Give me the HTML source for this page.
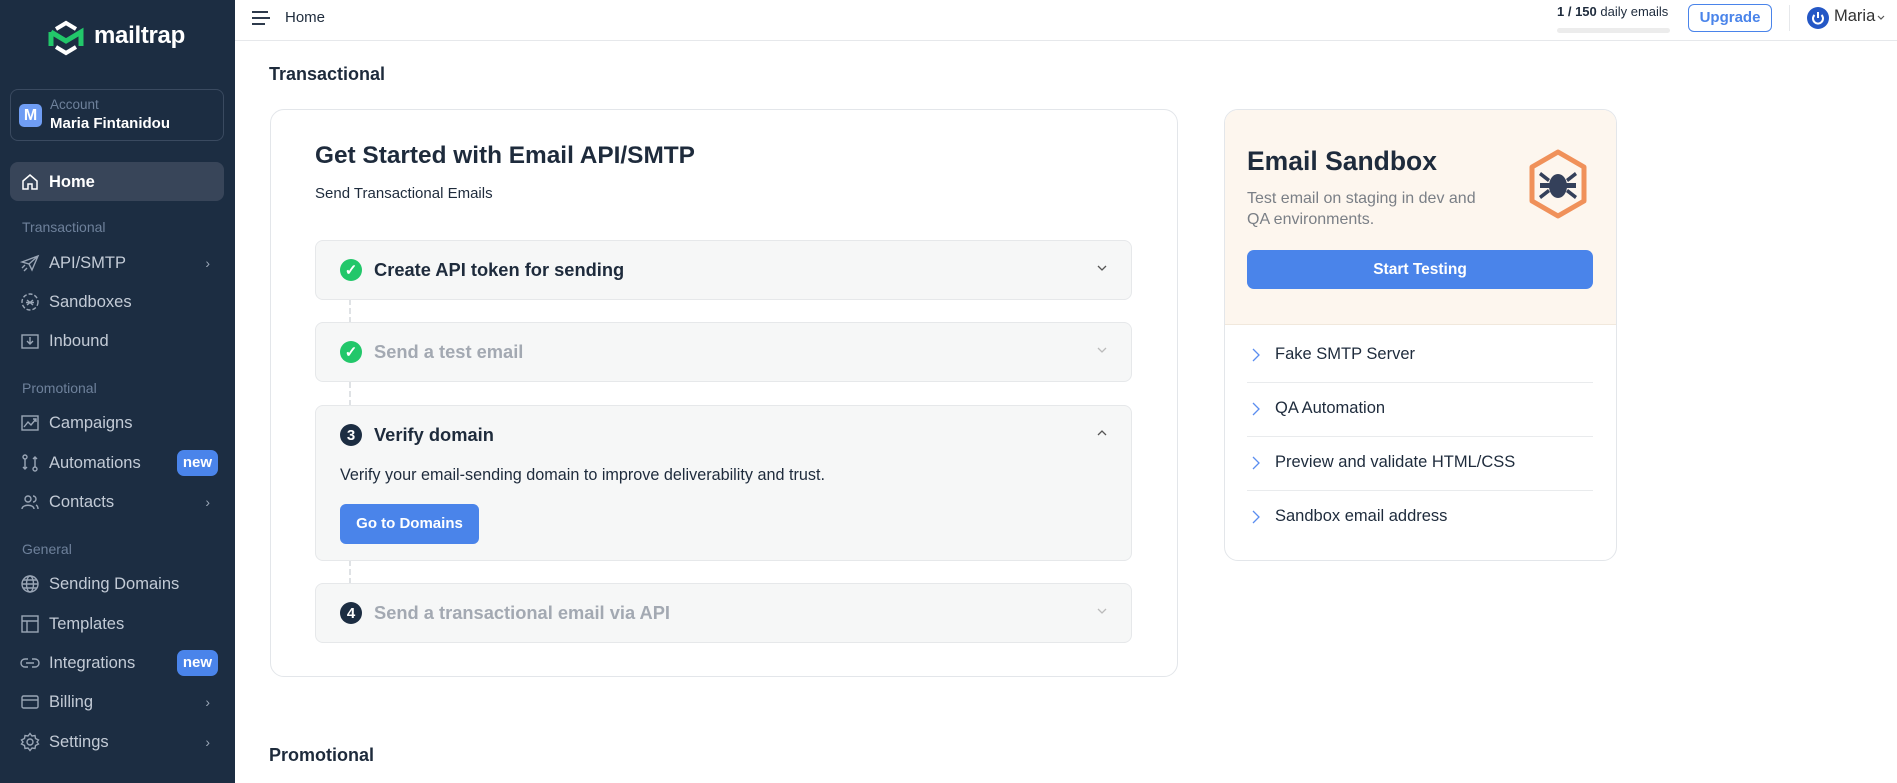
<!DOCTYPE html>
<html><head><meta charset="utf-8"><style>
*{box-sizing:border-box;margin:0;padding:0}
body{width:1897px;height:783px;overflow:hidden;background:#fff;font-family:"Liberation Sans",sans-serif;color:#1e2b3c;position:relative}
.a{position:absolute}
#sb{left:0;top:0;width:235px;height:783px;background:#1c2d42}
.nav{position:absolute;left:20px;font-size:16.5px;color:#c3cbd6;display:flex;align-items:center;height:24px;width:200px}
.nav svg{width:20px;height:20px;margin-right:9px;flex:none}
.lab{position:absolute;left:22px;font-size:14px;color:#6e819b}
.chev{position:absolute;right:10px;color:#9aa6b6;font-size:14px}
.new{position:absolute;right:2px;background:#4a84ea;color:#fff;font-weight:bold;font-size:15px;border-radius:7px;padding:3px 6px;line-height:20px}
.step{position:absolute;left:315px;width:817px;background:#f6f7f7;border:1px solid #e6e8ea;border-radius:8px}
.st{position:absolute;left:24px;top:18px;display:flex;align-items:center;font-size:18.3px;font-weight:bold}
.ic{width:22px;height:22px;border-radius:50%;margin-right:12px;display:flex;align-items:center;justify-content:center;color:#fff;font-size:15px;font-weight:bold}
.g{background:#22c76a}.d{background:#1c2d42}
.cv{position:absolute;right:24px;top:22px;width:10px;height:10px}
.li{position:absolute;left:1252px;font-size:16.5px;color:#1e2b3c;display:flex;align-items:center}
.li svg{margin-right:15px}
.sep{position:absolute;left:1247px;width:346px;height:1px;background:#e9ebed}
.vl{position:absolute;left:349px;width:0;border-left:2px dashed #dfe2e5}
</style></head><body>
<div id="sb" class="a">
 <svg class="a" style="left:48px;top:20px" width="36" height="36" viewBox="0 0 36 36"><path d="M8 9 L18 3 L28 9" fill="none" stroke="#fff" stroke-width="4"/><path d="M8 27 L18 33 L28 27" fill="none" stroke="#fff" stroke-width="4"/><path d="M3 12 V26 M3 12 L18 21 L33 12 V26" fill="none" stroke="#22c76a" stroke-width="5"/></svg>
 <div class="a" style="left:94px;top:22px;color:#fff;font-size:24px;font-weight:bold;letter-spacing:-0.3px">mailtrap</div>
 <div class="a" style="left:10px;top:89px;width:214px;height:52px;border:1px solid #3a4a60;border-radius:8px"></div>
 <div class="a" style="left:19px;top:104px;width:23px;height:23px;border-radius:5px;background:#6f9df4;color:#fff;font-weight:bold;font-size:16px;text-align:center;line-height:23px">M</div>
 <div class="a" style="left:50px;top:97px;font-size:13.5px;color:#6e819b">Account</div>
 <div class="a" style="left:50px;top:115px;font-size:15px;color:#fff;font-weight:bold">Maria Fintanidou</div>
 <div class="a" style="left:10px;top:162px;width:214px;height:39px;border-radius:8px;background:#384559"></div>
 <div class="nav" style="top:170px;color:#fff;font-weight:bold"><svg viewBox="0 0 20 20" fill="none" stroke="#fff" stroke-width="1.5"><path d="M3 9 L10 3 L17 9 V17 H12 V12 H8 V17 H3 Z"/></svg>Home</div>
 <div class="lab" style="top:219px">Transactional</div>
 <div class="nav" style="top:251px"><svg viewBox="0 0 20 20" fill="none" stroke="#9aa6b6" stroke-width="1.4"><path d="M2 9 L18 3 L12 17 L9 11 Z M9 11 L18 3 M2 15 L5 12 M4 18 L7 15"/></svg>API/SMTP<span class="chev">›</span></div>
 <div class="nav" style="top:290px"><svg viewBox="0 0 20 20" fill="none" stroke="#9aa6b6" stroke-width="1.4"><circle cx="10" cy="10" r="8" stroke-dasharray="4 2"/><path d="M7 8 L13 13 M13 8 L7 13 M6 10.5 H14"/></svg>Sandboxes</div>
 <div class="nav" style="top:329px"><svg viewBox="0 0 20 20" fill="none" stroke="#9aa6b6" stroke-width="1.4"><rect x="2" y="4" width="16" height="13"/><path d="M10 6 V13 M7 10 L10 13 L13 10"/></svg>Inbound</div>
 <div class="lab" style="top:380px">Promotional</div>
 <div class="nav" style="top:411px"><svg viewBox="0 0 20 20" fill="none" stroke="#9aa6b6" stroke-width="1.4"><rect x="2" y="3" width="16" height="14"/><path d="M4 14 L8 9 L11 12 L16 6 M13 6 H16 V9"/></svg>Campaigns</div>
 <div class="nav" style="top:451px"><svg viewBox="0 0 20 20" fill="none" stroke="#9aa6b6" stroke-width="1.4"><circle cx="5" cy="4" r="2"/><circle cx="15" cy="16" r="2"/><path d="M5 6 V16 M15 14 V4 M3 14 L5 16 L7 14 M13 6 L15 4 L17 6"/></svg>Automations<span class="new">new</span></div>
 <div class="nav" style="top:490px"><svg viewBox="0 0 20 20" fill="none" stroke="#9aa6b6" stroke-width="1.4"><circle cx="8" cy="7" r="3"/><path d="M2 17 C2 12 14 12 14 17 M13 4 A3 3 0 0 1 13 10 M16 13 C18 14 18 16 18 17"/></svg>Contacts<span class="chev">›</span></div>
 <div class="lab" style="top:541px">General</div>
 <div class="nav" style="top:572px"><svg viewBox="0 0 20 20" fill="none" stroke="#9aa6b6" stroke-width="1.4"><circle cx="10" cy="10" r="8"/><ellipse cx="10" cy="10" rx="3.5" ry="8"/><path d="M2 10 H18 M3.5 6 H16.5 M3.5 14 H16.5"/></svg>Sending Domains</div>
 <div class="nav" style="top:612px"><svg viewBox="0 0 20 20" fill="none" stroke="#9aa6b6" stroke-width="1.4"><rect x="2" y="2" width="16" height="16"/><path d="M2 7 H18 M7 7 V18"/></svg>Templates</div>
 <div class="nav" style="top:651px"><svg viewBox="0 0 20 20" fill="none" stroke="#9aa6b6" stroke-width="1.4"><path d="M8 6 H5 A4 4 0 0 0 5 14 H8 M12 6 H15 A4 4 0 0 1 15 14 H12 M6 10 H14"/></svg>Integrations<span class="new">new</span></div>
 <div class="nav" style="top:690px"><svg viewBox="0 0 20 20" fill="none" stroke="#9aa6b6" stroke-width="1.4"><rect x="2" y="4" width="16" height="12" rx="1.5"/><path d="M2 8 H18"/></svg>Billing<span class="chev">›</span></div>
 <div class="nav" style="top:730px"><svg viewBox="0 0 20 20" fill="none" stroke="#9aa6b6" stroke-width="1.4"><circle cx="10" cy="10" r="3"/><path d="M10 1.5 L12 4 L15 3.5 L15.5 6.5 L18.5 8 L17 10 L18.5 12 L15.5 13.5 L15 16.5 L12 16 L10 18.5 L8 16 L5 16.5 L4.5 13.5 L1.5 12 L3 10 L1.5 8 L4.5 6.5 L5 3.5 L8 4 Z"/></svg>Settings<span class="chev">›</span></div>
</div>
<!-- header -->
<div class="a" style="left:235px;top:40px;width:1662px;height:1px;background:#e6e8eb"></div>
<svg class="a" style="left:251px;top:10px" width="20" height="16" viewBox="0 0 20 16"><path d="M1 2 H17 M1 8 H19 M1 14 H14" stroke="#2d3a4c" stroke-width="2"/></svg>
<div class="a" style="left:285px;top:9px;font-size:15px;color:#1e2b3c">Home</div>
<div class="a" style="left:1557px;top:4px;font-size:13px;color:#1e2b3c"><b>1 / 150</b> daily emails</div>
<div class="a" style="left:1557px;top:28px;width:113px;height:5px;border-radius:3px;background:#ececec"></div>
<div class="a" style="left:1688px;top:4px;width:84px;height:28px;border:1.5px solid #4a84ea;border-radius:6px;color:#4a84ea;font-weight:bold;font-size:15px;text-align:center;line-height:25px">Upgrade</div>
<div class="a" style="left:1789px;top:5px;width:1px;height:26px;background:#e6e8eb"></div>
<svg class="a" style="left:1807px;top:7px" width="22" height="22" viewBox="0 0 22 22"><circle cx="11" cy="11" r="11" fill="#2457c5"/><path d="M7.5 8 A5 5 0 1 0 14.5 8" fill="none" stroke="#fff" stroke-width="2"/><path d="M11 5 V11" stroke="#fff" stroke-width="2"/></svg>
<div class="a" style="left:1834px;top:7px;font-size:16.5px;color:#333">Maria</div>
<svg class="a" style="left:1877px;top:15px" width="8" height="6" viewBox="0 0 8 6"><path d="M1 1 L4 4 L7 1" fill="none" stroke="#555" stroke-width="1.2"/></svg>
<!-- content -->
<div class="a" style="left:269px;top:64px;font-size:18px;font-weight:bold;color:#1e2b3c">Transactional</div>
<div class="a" style="left:270px;top:109px;width:908px;height:568px;border:1px solid #e3e6ea;border-radius:14px"></div>
<div class="a" style="left:315px;top:142px;font-size:24.4px;font-weight:bold">Get Started with Email API/SMTP</div>
<div class="a" style="left:315px;top:185px;font-size:15px">Send Transactional Emails</div>
<div class="vl" style="top:299px;height:24px"></div>
<div class="vl" style="top:382px;height:24px"></div>
<div class="vl" style="top:560px;height:24px"></div>
<div class="step" style="top:240px;height:60px"><div class="st"><div class="ic g">✓</div>Create API token for sending</div><svg class="cv" viewBox="0 0 10 10"><path d="M1 3 L5 7 L9 3" fill="none" stroke="#555" stroke-width="1.3"/></svg></div>
<div class="step" style="top:322px;height:60px"><div class="st" style="color:#a3a9b2"><div class="ic g">✓</div>Send a test email</div><svg class="cv" viewBox="0 0 10 10"><path d="M1 3 L5 7 L9 3" fill="none" stroke="#bbb" stroke-width="1.3"/></svg></div>
<div class="step" style="top:405px;height:156px"><div class="st"><div class="ic d">3</div>Verify domain</div><svg class="cv" viewBox="0 0 10 10"><path d="M1 7 L5 3 L9 7" fill="none" stroke="#555" stroke-width="1.3"/></svg>
 <div class="a" style="left:24px;top:60px;font-size:16.2px">Verify your email-sending domain to improve deliverability and trust.</div>
 <div class="a" style="left:24px;top:98px;width:139px;height:40px;background:#4a84ea;border-radius:6px;color:#fff;font-weight:bold;font-size:15px;text-align:center;line-height:40px">Go to Domains</div>
</div>
<div class="step" style="top:583px;height:60px"><div class="st" style="color:#a3a9b2"><div class="ic d">4</div>Send a transactional email via API</div><svg class="cv" viewBox="0 0 10 10"><path d="M1 3 L5 7 L9 3" fill="none" stroke="#bbb" stroke-width="1.3"/></svg></div>
<!-- sandbox card -->
<div class="a" style="left:1224px;top:109px;width:393px;height:452px;border:1px solid #e3e6ea;border-radius:14px;overflow:hidden"><div style="height:215px;background:#fdf6ee;border-bottom:1px solid #f1e8dc"></div></div>
<div class="a" style="left:1247px;top:146px;font-size:26.5px;font-weight:bold">Email Sandbox</div>
<div class="a" style="left:1247px;top:188px;font-size:16px;color:#7a7f86;line-height:21px">Test email on staging in dev and<br>QA environments.</div>
<svg class="a" style="left:1526px;top:148px" width="64" height="72" viewBox="0 0 64 72"><path d="M32 4 L58 19 V53 L32 68 L6 53 V19 Z" fill="none" stroke="#f0915a" stroke-width="5" stroke-linejoin="round"/><g fill="#34405a"><ellipse cx="32" cy="38" rx="9" ry="12"/><rect x="14" y="35" width="36" height="5"/><path d="M15 24 L24 31 L22 34 L13 27Z M49 24 L40 31 L42 34 L51 27Z M15 51 L24 44 L22 41 L13 48Z M49 51 L40 44 L42 41 L51 48Z"/></g></svg>
<div class="a" style="left:1247px;top:250px;width:346px;height:39px;background:#4a84ea;border-radius:7px;color:#fff;font-weight:bold;font-size:15.5px;text-align:center;line-height:39px">Start Testing</div>
<div class="li" style="top:345px"><svg width="8" height="14" viewBox="0 0 8 14"><path d="M1 1 L7 7 L1 13" fill="none" stroke="#5b8ef0" stroke-width="1.3"/></svg>Fake SMTP Server</div>
<div class="sep" style="top:382px"></div>
<div class="li" style="top:399px"><svg width="8" height="14" viewBox="0 0 8 14"><path d="M1 1 L7 7 L1 13" fill="none" stroke="#5b8ef0" stroke-width="1.3"/></svg>QA Automation</div>
<div class="sep" style="top:436px"></div>
<div class="li" style="top:453px"><svg width="8" height="14" viewBox="0 0 8 14"><path d="M1 1 L7 7 L1 13" fill="none" stroke="#5b8ef0" stroke-width="1.3"/></svg>Preview and validate HTML/CSS</div>
<div class="sep" style="top:490px"></div>
<div class="li" style="top:507px"><svg width="8" height="14" viewBox="0 0 8 14"><path d="M1 1 L7 7 L1 13" fill="none" stroke="#5b8ef0" stroke-width="1.3"/></svg>Sandbox email address</div>
<div class="a" style="left:269px;top:745px;font-size:18px;font-weight:bold">Promotional</div>
</body></html>
